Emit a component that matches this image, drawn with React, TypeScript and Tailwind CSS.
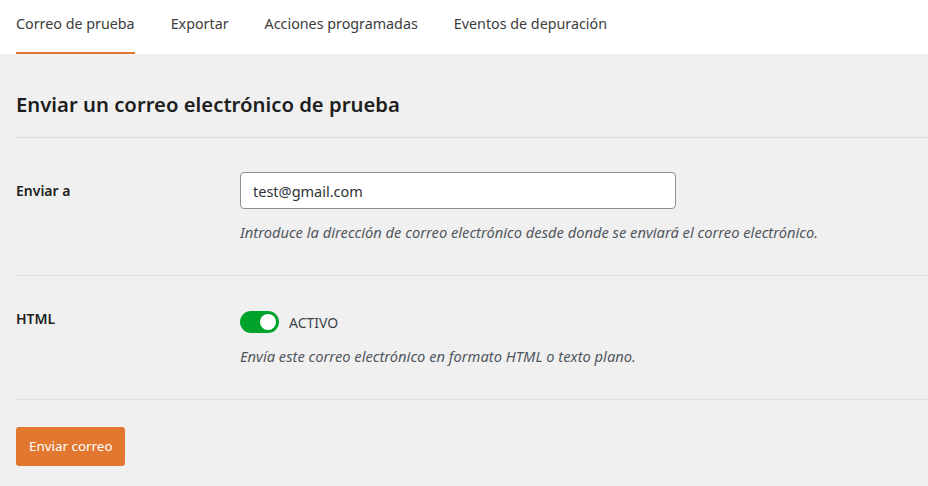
import React, { useState } from 'react';

const tabs = ['Correo de prueba', 'Exportar', 'Acciones programadas', 'Eventos de depuración'];

const App: React.FC = () => {
  const [active, setActive] = useState(0);
  const [email, setEmail] = useState('test@gmail.com');
  const [html, setHtml] = useState(true);

  return (
    <div className="min-h-screen bg-[#f0f0f0] text-[#1e1e1e]" style={{ fontFamily: '"Noto Sans", "Open Sans", sans-serif' }}>
      <nav className="flex h-[54px] gap-[36px] bg-white pl-4">
        {tabs.map((t, i) => (
          <button
            key={t}
            onClick={() => setActive(i)}
            className={`flex h-full items-center border-b-2 pb-[5px] text-[14.3px] text-[#3c3c3c] ${i === active ? 'border-[#e27730]' : 'border-transparent'}`}
          >
            {t}
          </button>
        ))}
      </nav>

      <div className="pl-4">
        <h1 className="border-b border-[#dedede] pt-[36px] pb-[19px] text-[20.3px] leading-[28px] font-semibold text-[#1e1e1e]">
          Enviar un correo electrónico de prueba
        </h1>

        <div className="flex border-b border-[#dedede] pt-[34px] pb-[33px]">
          <label className="w-[224px] pt-[9px] text-[14px] leading-5 font-semibold text-[#1e1e1e]">Enviar a</label>
          <div>
            <input
              value={email}
              onChange={e => setEmail(e.target.value)}
              className="h-[37px] w-[436px] rounded-[4px] border border-[#8c8f94] bg-white px-3 text-[14.5px] text-[#2c3338] outline-none"
            />
            <p className="mt-[13px] text-[14.7px] leading-5 italic text-[#50575e]">
              Introduce la dirección de correo electrónico desde donde se enviará el correo electrónico.
            </p>
          </div>
        </div>

        <div className="flex border-b border-[#dedede] pt-[35px] pb-[33px]">
          <label className="-mt-[2px] w-[224px] text-[14px] leading-5 font-semibold text-[#1e1e1e]">HTML</label>
          <div>
            <div className="flex items-center gap-[10px]">
              <button
                onClick={() => setHtml(!html)}
                className={`relative h-[22px] w-[39px] rounded-full ${html ? 'bg-[#00a32a]' : 'bg-[#8c8f94]'}`}
              >
                <span className={`absolute top-[3px] h-[16px] w-[16px] rounded-full bg-white ${html ? 'left-[20px]' : 'left-[3px]'}`} />
              </button>
              <span className="text-[14px] text-[#3c434a]">{html ? 'ACTIVO' : 'INACTIVO'}</span>
            </div>
            <p className="mt-[13px] text-[14.7px] leading-5 italic text-[#50575e]">
              Envía este correo electrónico en formato HTML o texto plano.
            </p>
          </div>
        </div>

        <button className="mt-[27px] h-[39px] rounded-[3px] bg-[#e27730] px-[13px] text-[13.4px] text-white">
          Enviar correo
        </button>
      </div>
    </div>
  );
};

export default App;
